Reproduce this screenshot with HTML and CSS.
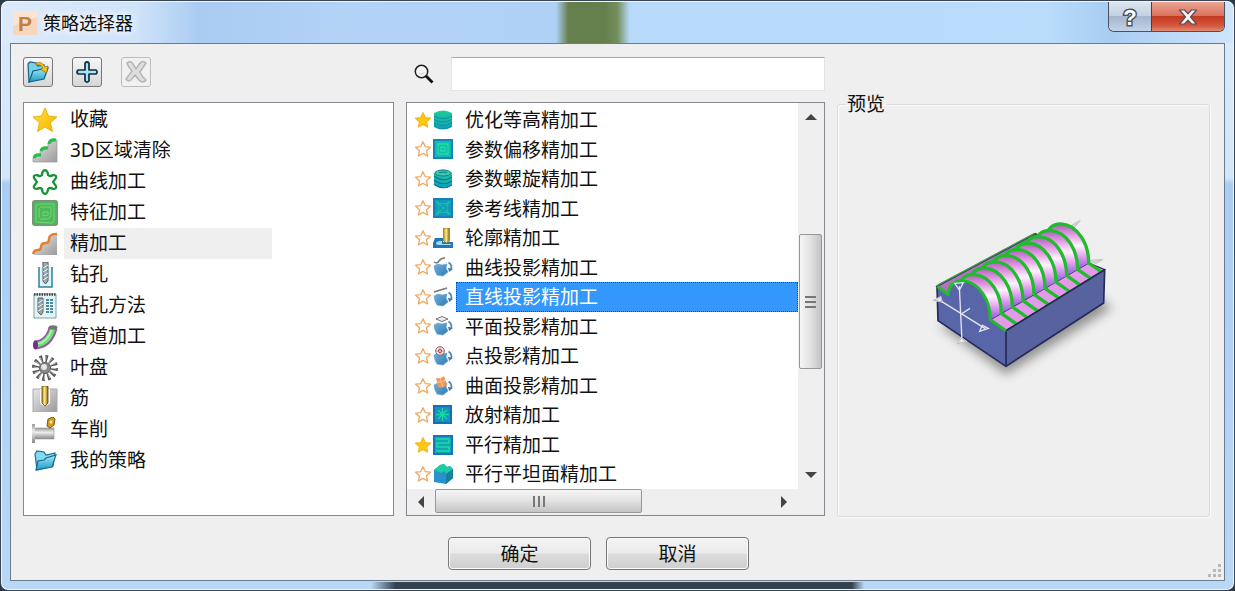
FILE: index.html
```html
<!DOCTYPE html>
<html lang="zh-CN">
<head>
  <meta charset="UTF-8">
  <title>策略选择器</title>
  <meta name="viewport" content="width=device-width, initial-scale=1.0">
  <link rel="stylesheet" href="styles.css">
</head>
<body>

<!-- shared icon shapes and gradients -->
<svg class="sprite" aria-hidden="true">
  <defs>
    <linearGradient id="gold" x1="0" y1="0" x2="1" y2="1">
      <stop offset="0" stop-color="#ffe23a"/><stop offset="1" stop-color="#f5b400"/>
    </linearGradient>
    <linearGradient id="steel" x1="0" y1="0" x2="1" y2="1">
      <stop offset="0" stop-color="#e8e8e8"/><stop offset="1" stop-color="#9a9a9a"/>
    </linearGradient>
    <linearGradient id="bar" x1="0" y1="0" x2="0" y2="1">
      <stop offset="0" stop-color="#999"/><stop offset=".4" stop-color="#eee"/><stop offset="1" stop-color="#888"/>
    </linearGradient>
    <linearGradient id="aqua" x1="0" y1="0" x2="0" y2="1">
      <stop offset="0" stop-color="#a4e6f6"/><stop offset="1" stop-color="#1c9cc8"/>
    </linearGradient>
    <linearGradient id="teal" x1="0" y1="0" x2="0" y2="1">
      <stop offset="0" stop-color="#1ccf92"/><stop offset="1" stop-color="#129fc0"/>
    </linearGradient>
    <linearGradient id="tool" x1="0" y1="0" x2="1" y2="0">
      <stop offset="0" stop-color="#b78a12"/><stop offset=".45" stop-color="#ffe98a"/><stop offset="1" stop-color="#8c6508"/>
    </linearGradient>
    <linearGradient id="blue" x1="0" y1="0" x2="1" y2="1">
      <stop offset="0" stop-color="#6fb2dd"/><stop offset="1" stop-color="#2f78b4"/>
    </linearGradient>
  </defs>

  <symbol id="star" viewBox="0 0 18 18"><path d="M9 1.8l2.200 4.800 5.200.6-3.900 3.600 1.100 5.200L9 13.400 4.400 16l1.100-5.200-3.900-3.600 5.200-.6z" stroke-width="1.300" stroke-linejoin="round"/></symbol>

  <symbol id="project" viewBox="0 0 20 20">
    <path d="M1 9l4-2 4 1 5-1-1 4 2 4-5 4-6-1-2-4z" fill="url(#blue)" stroke="#5b9cc9" stroke-width=".6"/>
    <path d="M15.500 5.500q3.500 2 2.800 6.500" fill="none" stroke="#4587b5" stroke-width="1.700"/>
    <path d="M14.800 10.800l5 1.300-3.500 3z" fill="#397ba9"/>
  </symbol>
</svg>

<div class="window">
  <header class="titlebar">
    <svg class="logo" viewBox="0 0 24 24" aria-hidden="true">
      <rect width="24" height="24" rx="1" fill="#fbe5d2"/>
      <path d="M0 15l24-9v18H0z" fill="#f8d6bc"/>
      <text x="5" y="20" class="logo-letter">P</text>
    </svg>
    <h1>策略选择器</h1>
    <div class="window-buttons">
      <button type="button" class="help" aria-label="帮助">
        <svg viewBox="0 0 24 28" width="24" height="28"><text x="12" y="22" class="help-mark">?</text></svg>
      </button>
      <button type="button" class="close" aria-label="关闭">
        <svg viewBox="0 0 20 16" width="20" height="16"><path d="M1.500 1h5L10 4.800 13.500 1h5l-6 7 6 7h-5L10 11.200 6.500 15h-5l6-7z" fill="#f6f6f8" stroke="#5b4a55" stroke-width="1.200" stroke-linejoin="round"/></svg>
      </button>
    </div>
  </header>

  <main class="client">
    <div class="toolbar">
      <button type="button" class="tool" aria-label="打开">
        <svg viewBox="0 0 26 26">
          <path d="M3 5l2-2 6 1 2 3 6-1v11L4 23z" fill="#74d3ea" stroke="#17627f" stroke-width="1.200"/>
          <path d="M4 23l4-11 15-3-4 11z" fill="url(#aqua)" stroke="#125f80" stroke-width="1.200"/>
          <path d="M11 4q6-2 9 4l3-1-1.500 7-6-4 2.500-1q-2-4-7-3z" fill="#f6c51c" stroke="#987010" stroke-width=".8"/>
        </svg>
      </button>
      <button type="button" class="tool" aria-label="新建">
        <svg viewBox="0 0 26 26"><path d="M11 4q2-2 4 0v7h7q2 2 0 4h-7v7q-2 2-4 0v-7H4q-2-2 0-4h7z" fill="#a9e4f7" stroke="#10303f" stroke-width="1.700" stroke-linejoin="round"/></svg>
      </button>
      <button type="button" class="tool" aria-label="删除" disabled>
        <svg viewBox="0 0 26 26"><path d="M4 4q4-3 6 1l3 5 4-6q3-3 6 0l-6 9q2 5 6 8-3 4-7 0l-4-5-4 5q-3 2-5-1l6-8q-4-4-5-8z" fill="#dedede" stroke="#b5b5b5" stroke-width="1.500" stroke-linejoin="round"/></svg>
      </button>
    </div>

    <div class="search">
      <label for="search" aria-label="搜索">
        <svg viewBox="0 0 20 20" width="20" height="20"><circle cx="7.500" cy="7.500" r="6.200" fill="#f7f7f7" stroke="#222" stroke-width="1.500"/><path d="M4.500 9q3 2.500 6-.5" fill="none" stroke="#ccc"/><path d="M12 12l6.500 6.500" stroke="#111" stroke-width="2.800"/></svg>
      </label>
      <input type="text" id="search">
    </div>

    <nav class="categories" aria-label="类别">
      <button type="button" class="category">
        <svg viewBox="0 0 26 26"><path d="M13 1l3.500 8 8.500 1-6.500 5.700 2 8.800L13 20l-7.500 4.500 2-8.800L1 10l8.500-1z" fill="url(#gold)" stroke="#eab312" stroke-linejoin="round"/></svg>
        <span>收藏</span>
      </button>
      <button type="button" class="category">
        <svg viewBox="0 0 26 26"><path d="M1 24v-4l3-3h4v-4l3-3h5V5l3-3h6v22z" fill="url(#steel)" stroke="#999" stroke-width=".7"/><path d="M2 20q1-4 7-3M9 13q1-4 7-3M17 6q1-5 7-4" fill="none" stroke="#27bd49" stroke-width="3.200"/></svg>
        <span>3D区域清除</span>
      </button>
      <button type="button" class="category">
        <svg viewBox="0 0 26 26"><path d="M13 1q3 1 3 5 2 2 5 0 4 0 3 3l-3 4 3 4q1 3-3 3-3-2-5 0 0 4-3 5-3-1-3-5-2-2-5 0-4 0-3-3l3-4-3-4Q1 6 5 6q3 2 5 0 0-4 3-5z" fill="#fff" stroke="#169334" stroke-width="2.200"/></svg>
        <span>曲线加工</span>
      </button>
      <button type="button" class="category">
        <svg viewBox="0 0 26 26"><rect x=".7" y=".7" width="24.600" height="24.600" rx="2" fill="#4fb85b" stroke="#7e8f80" stroke-width="1.400"/><path d="M4 22V5l2-1h16v17l-2 2zM7 18V9l2-2h10v9l-3 3H8M11 16v-4h5v3z" fill="none" stroke="#6fd678"/></svg>
        <span>特征加工</span>
      </button>
      <button type="button" class="category selected">
        <svg viewBox="0 0 26 26"><path d="M2 24v-3l6-2 2-6 6-1 2-6 7-2v20z" fill="url(#steel)"/><path d="M1 23q1-4 5-4 3 0 3-3 0-4 5-4 3 0 3-4 0-5 8-5" fill="none" stroke="#e87d2e" stroke-width="2.400"/></svg>
        <span>精加工</span>
      </button>
      <button type="button" class="category">
        <svg viewBox="0 0 26 26"><path d="M7 5v20h13V5" fill="#e0f4f7" stroke="#2c8397" stroke-width="1.500"/><path d="M11 0h5v19l-2.500 3-2.500-3z" fill="#9dacb1" stroke="#495a60"/><path d="M11 10l5-3M11 14l5-3M11 18l5-3M11 6l5-3" stroke="#eaf3f5"/></svg>
        <span>钻孔</span>
      </button>
      <button type="button" class="category">
        <svg viewBox="0 0 26 26"><path d="M2 1h22v24H2z" fill="#e2f4f6" stroke="#849fa5"/><path d="M2 1.500h22" stroke="#444" stroke-width="2.500" stroke-dasharray="1.500 1"/><path d="M6 5h5v14l-2 3-3-3z" fill="#9aa7aa" stroke="#586468"/><path d="M6 10l5-3M6 14l5-3M6 18l5-3" stroke="#eee"/><path d="M14 7h8M14 10h8M14 13h8M14 16h8M14 19h8" stroke="#176a80" stroke-width="1.600" stroke-dasharray="3 1"/></svg>
        <span>钻孔方法</span>
      </button>
      <button type="button" class="category">
        <svg viewBox="0 0 26 26"><path d="M3 21Q17 20 21 4" fill="none" stroke="#8e5b9a" stroke-width="9"/><path d="M4 21Q17 19 21 4" fill="none" stroke="#72df7c" stroke-width="5"/><path d="M5 20Q16 18 20 5" fill="none" stroke="#b6f8ac" stroke-width="1.500"/><ellipse cx="3.500" cy="21" rx="2.500" ry="4.400" fill="#7c2c90"/><ellipse cx="21" cy="3.500" rx="4.400" ry="2.200" fill="#70757a"/></svg>
        <span>管道加工</span>
      </button>
      <button type="button" class="category">
        <svg viewBox="0 0 26 26"><circle cx="13" cy="13" r="9.500" fill="none" stroke="#555" stroke-width="7" stroke-dasharray="2.400 2.570"/><circle cx="13" cy="13" r="9" fill="none" stroke="#b8b8b8" stroke-width="5" stroke-dasharray="1 3.710"/><circle cx="13" cy="13" r="5.500" fill="#8a8a8a" stroke="#555"/><circle cx="12" cy="12" r="3" fill="#e4e4e4"/></svg>
        <span>叶盘</span>
      </button>
      <button type="button" class="category">
        <svg viewBox="0 0 26 26"><path d="M1 3h24v23H1z" fill="url(#steel)" stroke="#aaa"/><path d="M8 3h10v14q-5 6-10 0z" fill="#f6f6f6"/><path d="M10 0h6v17l-3 3-3-3z" fill="url(#tool)" stroke="#5c4612" stroke-width=".8"/></svg>
        <span>筋</span>
      </button>
      <button type="button" class="category">
        <svg viewBox="0 0 26 26"><path d="M2 11h20v11H2z" fill="url(#bar)" stroke="#999" stroke-width=".6"/><path d="M0 7h3v19H0z" fill="url(#bar)"/><path d="M16 2l5-2 2 2-1 6-4 3-3-2z" fill="#d79b1e" stroke="#7d5710"/><circle cx="19" cy="5" r="1.500" fill="#fff0b0"/></svg>
        <span>车削</span>
      </button>
      <button type="button" class="category">
        <svg viewBox="0 0 26 26"><path d="M3 6l2-3 7 1 2 3 9-2-2 13-16 4z" fill="#83daf0" stroke="#196f91" stroke-width="1.200"/><path d="M4 22l2-9 6-1 2-2 10-3-4 12z" fill="url(#aqua)" stroke="#176b8d" stroke-width="1.200"/></svg>
        <span>我的策略</span>
      </button>
    </nav>

    <section class="strategies" aria-label="策略">
      <ul class="strategy-list">
        <li class="strategy">
          <button type="button" class="star on" aria-label="收藏"><svg><use href="#star"/></svg></button>
          <button type="button" class="strategy-name">
            <svg viewBox="0 0 20 20"><path d="M1 3q9-5 18 0v14q-9 5-18 0z" fill="url(#teal)"/><path d="M1 6q9 5 18 0M1 9.500q9 5 18 0M1 13q9 5 18 0M1 16q9 5 18 0" fill="none" stroke="#0f8f9f"/></svg>
            <span>优化等高精加工</span>
          </button>
        </li>
        <li class="strategy">
          <button type="button" class="star" aria-label="收藏"><svg><use href="#star"/></svg></button>
          <button type="button" class="strategy-name">
            <svg viewBox="0 0 20 20"><path d="M0 0h20v20H0z" fill="#1584b8"/><path d="M2 2h16v16H2z" fill="#16b9ad"/><path d="M5 5h10v10H5zM8 8h4v4H8z" fill="none" stroke="#1fe0a5" stroke-width="1.300"/></svg>
            <span>参数偏移精加工</span>
          </button>
        </li>
        <li class="strategy">
          <button type="button" class="star" aria-label="收藏"><svg><use href="#star"/></svg></button>
          <button type="button" class="strategy-name">
            <svg viewBox="0 0 20 20"><path d="M1 4q9-7 18 0v12q-9 6-18 0z" fill="url(#teal)"/><ellipse cx="10" cy="4" rx="8" ry="3" fill="#42caa6" stroke="#177f92"/><path d="M1 7q9 7 18 1M1 11q9 7 18 1M1 15q9 7 18 1M6 4q5-2 8 0" fill="none" stroke="#0b7899" stroke-width="1.100"/></svg>
            <span>参数螺旋精加工</span>
          </button>
        </li>
        <li class="strategy">
          <button type="button" class="star" aria-label="收藏"><svg><use href="#star"/></svg></button>
          <button type="button" class="strategy-name">
            <svg viewBox="0 0 20 20"><path d="M0 0h20v20H0z" fill="#1580bb"/><path d="M2 2h16v16H2z" fill="#1598bb"/><path d="M3 3q7 6 14 0-6 7 0 14-7-6-14 0 6-7 0-14M3 3l14 14M17 3L3 17" fill="none" stroke="#14c7a8"/></svg>
            <span>参考线精加工</span>
          </button>
        </li>
        <li class="strategy">
          <button type="button" class="star" aria-label="收藏"><svg><use href="#star"/></svg></button>
          <button type="button" class="strategy-name">
            <svg viewBox="0 0 20 20"><path d="M0 20v-5l2-5h8v4h10v6z" fill="#2378b4"/><path d="M3 16q0-3 4-3h2v3h9v1H5z" fill="#a6d8f2"/><path d="M10.500 0h6v13l-3 2-3-2z" fill="url(#tool)" stroke="#856714" stroke-width=".6"/></svg>
            <span>轮廓精加工</span>
          </button>
        </li>
        <li class="strategy">
          <button type="button" class="star" aria-label="收藏"><svg><use href="#star"/></svg></button>
          <button type="button" class="strategy-name">
            <svg viewBox="0 0 20 20"><use href="#project"/><path d="M1 5q3 2 5-1t6-3" fill="none" stroke="#7d7d7d" stroke-width="1.500"/></svg>
            <span>曲线投影精加工</span>
          </button>
        </li>
        <li class="strategy selected">
          <button type="button" class="star" aria-label="收藏"><svg><use href="#star"/></svg></button>
          <button type="button" class="strategy-name">
            <svg viewBox="0 0 20 20"><use href="#project"/><path d="M1 5l13-4" stroke="#777" stroke-width="1.500"/></svg>
            <span>直线投影精加工</span>
          </button>
        </li>
        <li class="strategy">
          <button type="button" class="star" aria-label="收藏"><svg><use href="#star"/></svg></button>
          <button type="button" class="strategy-name">
            <svg viewBox="0 0 20 20"><use href="#project"/><path d="M3 3l6-2.500L15 3 9 5.500z" fill="#eee" stroke="#777"/></svg>
            <span>平面投影精加工</span>
          </button>
        </li>
        <li class="strategy">
          <button type="button" class="star" aria-label="收藏"><svg><use href="#star"/></svg></button>
          <button type="button" class="strategy-name">
            <svg viewBox="0 0 20 20"><use href="#project"/><circle cx="7" cy="5" r="4.300" fill="#f5eeee" stroke="#86635e"/><path d="M7 0v10M2 5h10" stroke="#a98a84" stroke-width=".7"/><circle cx="7" cy="5" r="1.800" fill="none" stroke="#bd4b3c"/></svg>
            <span>点投影精加工</span>
          </button>
        </li>
        <li class="strategy">
          <button type="button" class="star" aria-label="收藏"><svg><use href="#star"/></svg></button>
          <button type="button" class="strategy-name">
            <svg viewBox="0 0 20 20"><use href="#project"/><path d="M3 2q5 1 8-2l3 9q-5 4-9 2z" fill="#ef965f"/><path d="M4 6q5 1 8-2M7 2l3 9" fill="none" stroke="#ffc59f"/></svg>
            <span>曲面投影精加工</span>
          </button>
        </li>
        <li class="strategy">
          <button type="button" class="star" aria-label="收藏"><svg><use href="#star"/></svg></button>
          <button type="button" class="strategy-name">
            <svg viewBox="0 0 20 20"><path d="M0 0h19v19H0z" fill="#176fbb"/><path d="M2 2h15v15H2z" fill="#1693bd"/><path d="M9.500 3v13M3 9.500h13M5 5l9 9M14 5l-9 9" stroke="#18d7a5" stroke-width="1.400"/></svg>
            <span>放射精加工</span>
          </button>
        </li>
        <li class="strategy">
          <button type="button" class="star on" aria-label="收藏"><svg><use href="#star"/></svg></button>
          <button type="button" class="strategy-name">
            <svg viewBox="0 0 20 20"><path d="M0 0h20v20H0z" fill="#1875bb"/><path d="M2 2h16v16H2z" fill="#12a5b4"/><path d="M3 4h13v4H4v4h12v4H3" fill="none" stroke="#1bdba5" stroke-width="1.500"/></svg>
            <span>平行精加工</span>
          </button>
        </li>
        <li class="strategy">
          <button type="button" class="star" aria-label="收藏"><svg><use href="#star"/></svg></button>
          <button type="button" class="strategy-name">
            <svg viewBox="0 0 20 20"><path d="M1 6l6-5 4-1 3 3 3-1 3 3v9l-7 6-12-2z" fill="#2792cc"/><path d="M1 6l6-5 4-1 3 3 3-1 3 3-7 5q-1-5-5-1z" fill="#1ccda0"/><path d="M13 10l7-5v9l-7 6z" fill="#13829e"/></svg>
            <span>平行平坦面精加工</span>
          </button>
        </li>
      </ul>

      <div class="scroll-y">
        <button type="button" class="scroll-button" aria-label="向上"><i class="arrow up"></i></button>
        <div class="thumb"><i></i><i></i><i></i></div>
        <button type="button" class="scroll-button" aria-label="向下"><i class="arrow down"></i></button>
      </div>
      <div class="scroll-x">
        <button type="button" class="scroll-button" aria-label="向左"><i class="arrow left"></i></button>
        <div class="thumb"><i></i><i></i><i></i></div>
        <button type="button" class="scroll-button" aria-label="向右"><i class="arrow right"></i></button>
      </div>
    </section>

    <fieldset class="preview">
      <legend>预览</legend>
      <svg viewBox="6 17 660 660" role="img" aria-label="直线投影精加工">
        <defs>
          <linearGradient id="skin" x1="0" y1="0" x2="0" y2="1">
            <stop offset="0" stop-color="#a85fba"/>
            <stop offset=".2" stop-color="#e08fe0"/>
            <stop offset=".48" stop-color="#fff4ff"/>
            <stop offset=".68" stop-color="#ecaaf2"/>
            <stop offset="1" stop-color="#8b5ad8"/>
          </linearGradient>
          <filter id="soft" x="-20%" y="-20%" width="140%" height="140%"><feGaussianBlur stdDeviation="16"/></filter>
          <path id="slice" d="M108 280Q112 238 152 238C205 242 235 300 235 355L202 374Z" fill="url(#skin)"/>
          <path id="pass" d="M76 255L108 280Q112 238 152 238C205 242 235 300 235 355L282 388" fill="none" stroke="#1fbd2b" stroke-width="9" stroke-linejoin="round"/>
          <path id="cut" d="M108 280Q112 238 152 238C205 242 235 300 235 355L282 388" fill="none" stroke="#1fbd2b" stroke-width="10" stroke-linejoin="round"/>
          <g id="ring"><use href="#slice"/><use href="#cut"/></g>
        </defs>
        <path d="M80 370L282 520 600 320 560 290z" fill="#555" opacity=".6" filter="url(#soft)"/>
        <path d="M75 255L370 97 404 120 108 280z" fill="#b074bb" stroke="#35335c" stroke-width="5"/>
        <path d="M76 252L368 96" stroke="#3f9a4c" stroke-width="4"/>
        <path d="M235 355L530 185 578 205 282 388z" fill="#e39ae8" stroke="#35335c" stroke-width="4"/>
        <g stroke="#c9c9c9" fill="#d8d8d8" stroke-width="4"><path d="M470 95L505 58 482 70zM530 178l42-4-20 12z"/></g>
        <use href="#ring" x="295" y="-170"/>
        <use href="#ring" x="262" y="-151"/>
        <use href="#ring" x="229" y="-132"/>
        <use href="#ring" x="197" y="-113"/>
        <use href="#ring" x="164" y="-94"/>
        <use href="#ring" x="131" y="-76"/>
        <use href="#ring" x="98" y="-57"/>
        <use href="#ring" x="66" y="-38"/>
        <use href="#ring" x="33" y="-19"/>
        <path d="M75 255L108 280Q112 238 152 238C205 242 235 300 235 355L282 388V495L78 358z" fill="#5965a9"/>
        <path d="M282 388L578 205 575 305 282 495z" fill="#58629f"/>
        <path d="M75 255L78 358 282 495 575 305 578 205 282 388V495" fill="none" stroke="#252a55" stroke-width="5" stroke-linejoin="round"/>
        <use href="#pass"/>
        <g fill="none" stroke="#e3e5f1" stroke-width="4">
          <path d="M142 255L150 420M80 295L220 382M148 338L174 321"/>
          <path d="M128 246l26-2-12 22zM64 297l22-10 4 14zM203 390l8-18 18 9zM136 428l12-18 14 10z"/>
        </g>
        <path d="M64 297l22-10 4 14zM136 428l12-18 14 10z" fill="#e8e8ee" stroke="#b9b9c2" stroke-width="3"/>
      </svg>
    </fieldset>

    <footer class="actions">
      <button type="button" class="btn">确定</button>
      <button type="button" class="btn">取消</button>
    </footer>

    <svg class="grip" viewBox="0 0 14 14" aria-hidden="true"><path d="M10 0h3v3h-3zM10 5h3v3h-3zM5 5h3v3H5zM10 10h3v3h-3zM5 10h3v3H5zM0 10h3v3H0z" fill="#b9b9b9"/></svg>
  </main>
</div>

</body>
</html>
```
FILE: styles.css
```css
* {
  box-sizing: border-box;
}

body {
  margin: 0;
  height: 100vh;
  background: #2b3846;
  font-family: "Noto Sans", "Noto Sans CJK SC", sans-serif;
  font-size: 19px;
  color: #111;
}

button {
  font: inherit;
  color: inherit;
  padding: 0;
  border: none;
  background: none;
}

svg {
  display: block;
}

.sprite {
  position: absolute;
  width: 0;
  height: 0;
}

/* glass frame */
.window {
  height: 100%;
  display: flex;
  flex-direction: column;
  border: 1px solid #3a4654;
  border-radius: 8px;
  box-shadow: inset 0 0 0 1px #eef6fd;
  background:
    linear-gradient(to right, transparent 30%, #35414f 32%, #35414f 69%, transparent 70%) bottom / 100% 8px no-repeat,
    linear-gradient(#dbeafa 0, #d3e6f9 30%, #aacdf1 31%, #b9d8f6 100%);
}

.titlebar {
  flex: 0 0 42px;
  display: flex;
  align-items: center;
  padding-left: 11px;
  margin: 0 1px;
  border-top: 1px solid #eef6fd;
  border-top-left-radius: 7px;
  border-top-right-radius: 7px;
  background: linear-gradient(to right, #dceafa 0, #cfe3f9 11%, #aaccf2 16%, #b2d2f6 28%, #b0d1f6 45%, #667f4d 46%, #65804c 49%, #748f5d 50%, #b8dafb 51%, #b9dcfb 85%, #a8cdf2 90%, #cfe5fb 100%);
}

.logo {
  width: 24px;
  height: 24px;
  overflow: visible;
}

.logo-letter {
  font: bold 21px "Liberation Sans", sans-serif;
  fill: #c1803f;
}

.titlebar h1 {
  margin: 0 0 0 6px;
  font-size: 18px;
  font-weight: 400;
  line-height: 24px;
  text-shadow: 0 0 8px #fff, 0 0 8px #fff;
}

.window-buttons {
  align-self: flex-start;
  display: flex;
  height: 30px;
  margin-left: auto;
  margin-right: 8px;
  border: 1px solid #49505f;
  border-top: none;
  border-radius: 0 0 6px 6px;
}

.window-buttons button {
  display: flex;
  align-items: center;
  justify-content: center;
}

.window-buttons svg {
  overflow: visible;
}

.help {
  width: 42px;
  border-bottom-left-radius: 5px;
  background: linear-gradient(#dce5f0, #c3d0e1 48%, #a5b6cd 50%, #c3d4e8);
}

.help-mark {
  font: bold 22px "Liberation Sans", sans-serif;
  text-anchor: middle;
  fill: #fff;
  stroke: #4c5360;
  stroke-width: 3px;
  paint-order: stroke;
}

.close {
  width: 73px;
  border-left: 1px solid #5b3440;
  border-bottom-right-radius: 5px;
  background: linear-gradient(#eba695, #d9705d 48%, #c13a22 50%, #d4553a 80%, #e18a70);
}

.client {
  position: relative;
  flex: 1;
  min-height: 0;
  margin: 0 9px 9px;
  padding: 13px 14px 10px 12px;
  border: 1px solid #6c7b8c;
  background: #efefef;
  display: grid;
  grid-template-columns: 371fr 419fr 373fr;
  grid-template-rows: 34px minmax(0, 1fr) 33px;
  column-gap: 12px;
}

.toolbar {
  display: flex;
  gap: 19px;
}

.tool {
  width: 30px;
  height: 30px;
  display: flex;
  align-items: center;
  justify-content: center;
  border: 1px solid #777;
  border-radius: 3px;
  background: linear-gradient(#f7f7f7, #d6d6d6);
}

.tool svg {
  width: 26px;
  height: 26px;
}

.tool:disabled {
  border-color: #bdbdbd;
  background: #f1f1f1;
}

.search {
  display: flex;
  align-items: center;
  padding-left: 8px;
  gap: 17px;
}

.search input {
  flex: 1;
  min-width: 0;
  height: 34px;
  padding: 0 8px;
  font: inherit;
  border: 1px solid #e3e3e3;
  border-top-color: #a9a9a9;
  background: #fff;
}

.categories,
.strategies {
  margin: 11px 0 21px;
  border: 1px solid #84888f;
  background: #fff;
  min-height: 0;
}

.categories {
  grid-column: 1;
  padding: 1px 8px;
}

.category {
  display: flex;
  align-items: center;
  gap: 6px;
  width: 100%;
  height: 31px;
  text-align: left;
}

.category svg {
  flex: none;
  width: 26px;
  height: 26px;
}

.category span {
  width: 59%;
  padding-left: 6px;
  line-height: 31px;
}

.category.selected span {
  background: #efefef;
}

.strategies {
  display: grid;
  grid-template-columns: minmax(0, 1fr) 26px;
  grid-template-rows: minmax(0, 1fr) 26px;
  background: #efefef;
}

/* rows share the visible height of the list */
.strategy-list {
  list-style: none;
  margin: 0;
  padding: 2px 0 0 7px;
  background: #fff;
  display: flex;
  flex-direction: column;
}

.strategy {
  flex: 1;
  min-height: 0;
  display: flex;
}

.star {
  display: flex;
  align-items: center;
}

.star svg {
  width: 18px;
  height: 18px;
  fill: #fff;
  stroke: #f0a860;
}

.star.on svg {
  fill: #ffc90f;
  stroke: #f5b921;
}

.strategy-name {
  flex: 1;
  display: flex;
  align-items: center;
  gap: 3px;
  padding-left: 1px;
  text-align: left;
}

.strategy-name svg {
  flex: none;
  width: 20px;
  height: 20px;
}

.strategy-name span {
  flex: 1;
  align-self: stretch;
  padding-left: 8px;
  line-height: 28px;
  border: 1px solid transparent;
}

.strategy.selected span {
  color: #fff;
  background: #3397fb;
  border: 1px dotted #1b4e8a;
}

.scroll-y {
  display: grid;
  grid-template-rows: 28px 103fr 135fr 92fr 28px;
}

.scroll-y .thumb {
  grid-row: 3;
  flex-direction: column;
  margin: 0 2px 0 1px;
  background: linear-gradient(to right, #f5f5f5, #e4e4e4 45%, #c4c4c4);
}

.scroll-y .scroll-button:last-child {
  grid-row: 5;
}

.scroll-x {
  display: grid;
  grid-template-columns: 28px 207fr 128fr 28px;
}

.scroll-x .thumb {
  margin-bottom: 2px;
  background: linear-gradient(#f5f5f5, #e4e4e4 45%, #c4c4c4);
}

.scroll-x .scroll-button:last-child {
  grid-column: 4;
}

.thumb {
  display: flex;
  align-items: center;
  justify-content: center;
  gap: 3px;
  border: 1px solid #979797;
  border-radius: 2px;
}

.scroll-y .thumb i {
  width: 11px;
  height: 2px;
  background: #777;
}

.scroll-x .thumb i {
  width: 2px;
  height: 11px;
  background: #777;
}

.scroll-button {
  display: flex;
  align-items: center;
  justify-content: center;
}

.arrow {
  background: #444;
}

.up,
.down {
  width: 12px;
  height: 6px;
}

.left,
.right {
  width: 6px;
  height: 12px;
}

.up {
  clip-path: polygon(50% 0, 100% 100%, 0 100%);
}

.down {
  clip-path: polygon(0 0, 100% 0, 50% 100%);
}

.left {
  clip-path: polygon(100% 0, 100% 100%, 0 50%);
}

.right {
  clip-path: polygon(0 0, 100% 50%, 0 100%);
}

.preview {
  grid-column: 3;
  min-width: 0;
  margin: 0 0 20px;
  padding: 0;
  border: 1px solid #dcdcdc;
  border-radius: 3px;
  box-shadow: inset 1px 1px #fafafa, 1px 1px #fafafa;
  display: flex;
  align-items: center;
  justify-content: center;
}

.preview legend {
  margin-left: 8px;
  padding: 0 1px;
  line-height: 26px;
}

.preview svg {
  width: 220px;
  height: 220px;
}

.actions {
  grid-column: 1 / -1;
  display: flex;
  justify-content: center;
  gap: 15px;
  padding-right: 36px;
}

.btn {
  width: 143px;
  height: 33px;
  line-height: 30px;
  border: 1px solid #777;
  border-radius: 4px;
  box-shadow: inset 0 0 0 1px #fafafa;
  background: linear-gradient(#f3f3f3, #ebebeb 48%, #dcdcdc 52%, #cfcfcf);
}

.grip {
  position: absolute;
  right: 2px;
  bottom: 2px;
  width: 14px;
  height: 14px;
}
```
